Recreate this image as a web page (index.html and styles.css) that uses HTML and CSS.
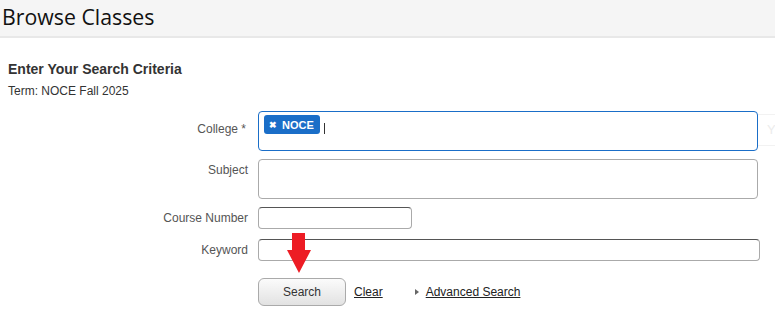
FILE: index.html
```html
<!DOCTYPE html>
<html lang="en">
<head>
    <meta charset="UTF-8">
    <title>Browse Classes</title>
    <link rel="stylesheet" href="styles.css">
</head>
<body>
    <header class="page-header">
        <h1>Browse Classes</h1>
    </header>
    <div class="content">
        <h2>Enter Your Search Criteria</h2>
        <p class="term">Term: NOCE Fall 2025</p>

        <form class="search-form">
            <label class="lbl lbl-college">College *</label>
            <div class="field-row">
                <div class="multi focused">
                    <span class="tag"><span class="tag-x">&#10006;</span>NOCE</span>
                    <span class="caret"></span>
                </div>
                <div class="ghost">Y</div>
            </div>

            <label class="lbl lbl-subject">Subject</label>
            <div class="field-row">
                <div class="multi"></div>
            </div>

            <label class="lbl">Course Number</label>
            <div class="field-row">
                <input type="text" class="txt short">
            </div>

            <label class="lbl row-keyword">Keyword</label>
            <div class="field-row row-keyword">
                <input type="text" class="txt wide">
            </div>

            <div class="row-actions"></div>
            <div class="actions row-actions">
                <button type="button" class="btn">Search</button>
                <a href="#" class="link">Clear</a>
                <span class="adv"><span class="tri"></span><a href="#" class="link">Advanced Search</a></span>
                <svg class="arrow" width="26" height="42" viewBox="0 0 26 42">
                    <path d="M5 0 H18 V17 H24 L12 40 L0 17 H5 Z" fill="#ed1c24"/>
                </svg>
            </div>
        </form>
    </div>
</body>
</html>
```

FILE: styles.css
```css
body {
    margin: 0;
    font-family: "Liberation Sans", Arial, sans-serif;
    font-size: 12px;
    color: #333;
    background: #fff;
}
.page-header {
    background-color: #f5f5f5;
    border-bottom: 2px solid #e8e8e8;
    height: 36px;
}
.page-header h1 {
    margin: 0;
    padding-left: 2px;
    font-family: "Open Sans", sans-serif;
    font-weight: normal;
    font-size: 21.3px;
    line-height: 34px;
    color: #111;
}
.content {
    padding: 22px 0 0 0;
}
.content h2 {
    margin: 0 0 0 8px;
    font-size: 14px;
    font-weight: bold;
    color: #333;
    line-height: 18px;
}
.term {
    margin: 6px 0 0 8px;
    line-height: 14px;
    color: #333;
}
.search-form {
    display: grid;
    grid-template-columns: 258px auto;
    row-gap: 8px;
    margin-top: 13px;
}
.lbl {
    text-align: right;
    padding-right: 10px;
    color: #555;
    line-height: 22px;
}
.lbl-college {
    padding-top: 7px;
    padding-right: 12px;
}
.field-row {
    display: flex;
    align-items: flex-start;
}
.row-keyword {
    margin-top: 2px;
}
.row-actions {
    margin-top: 9px;
}
.multi {
    box-sizing: border-box;
    width: 500px;
    height: 40px;
    border: 1px solid #aaa;
    border-radius: 4px;
    padding: 3px 5px;
    display: flex;
    align-items: flex-start;
}
.multi.focused {
    border-color: #1a6ec8;
}
.tag {
    display: inline-flex;
    align-items: center;
    background-color: #1a6ec8;
    color: #fff;
    font-weight: bold;
    font-size: 11px;
    height: 19px;
    padding: 0 6px 0 5px;
    border-radius: 3px;
}
.tag-x {
    font-size: 9px;
    margin-right: 5px;
}
.caret {
    width: 1px;
    height: 11px;
    background: #333;
    margin: 8px 0 0 4px;
}
.ghost {
    margin-top: 3px;
    width: 18px;
    height: 30px;
    border-top: 1px solid #f2f2f2;
    border-bottom: 1px solid #f2f2f2;
    color: #ececec;
    font-size: 13px;
    line-height: 30px;
    padding-left: 9px;
}
.txt {
    box-sizing: border-box;
    height: 22px;
    border: 1px solid #aaa;
    border-top-color: #555;
    border-radius: 4px;
    padding: 0 4px;
    margin: 0;
    font-family: inherit;
}
.txt.short {
    width: 154px;
}
.txt.wide {
    width: 502px;
}
.actions {
    position: relative;
    display: flex;
    align-items: center;
}
.btn {
    box-sizing: border-box;
    width: 88px;
    height: 28px;
    border: 1px solid #aaa;
    border-radius: 6px;
    background: linear-gradient(#fbfbfb, #e2e2e2);
    font-family: inherit;
    font-size: 12px;
    color: #333;
    margin-right: 8px;
}
.link {
    color: #222;
    text-decoration: underline;
}
.adv {
    margin-left: 32px;
    display: flex;
    align-items: center;
}
.tri {
    width: 0;
    height: 0;
    border-left: 4px solid #666;
    border-top: 3px solid transparent;
    border-bottom: 3px solid transparent;
    margin-right: 7px;
}
.arrow {
    position: absolute;
    left: 29px;
    top: -45px;
}
```
